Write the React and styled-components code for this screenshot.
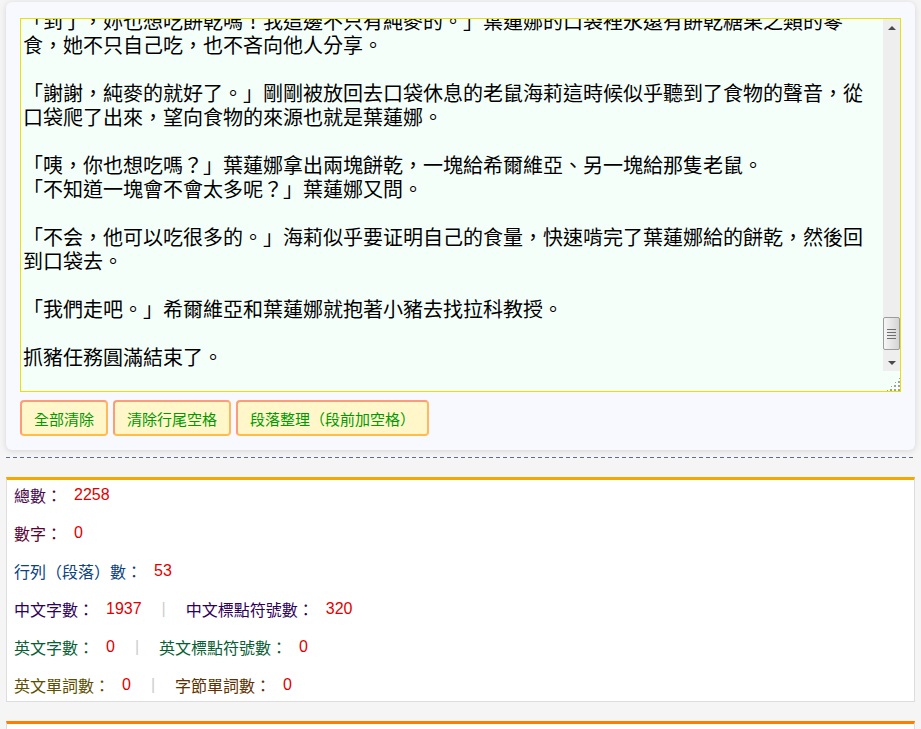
import React, { useLayoutEffect, useRef } from "react";
import styled, { createGlobalStyle } from "styled-components";

const GlobalStyle = createGlobalStyle`
  html, body {
    margin: 0;
    background: #f5f5f5;
  }
  body {
    font-family: "Liberation Sans", "Noto Sans CJK TC", sans-serif;
  }
`;

// layout
const Page = styled.div`
  padding: 2px 6px 0;
`;

const EditorCard = styled.div`
  background: #f8f8ff;
  border-radius: 6px;
  box-shadow: 0 1px 6px rgba(0, 0, 0, 0.13);
  padding: 16px 14px 14px;
`;

const TextWrap = styled.div`
  position: relative;
`;

const TextBox = styled.textarea`
  display: block;
  box-sizing: border-box;
  width: 100%;
  height: 374px;
  margin: 0;
  padding: 2px 19px 2px 2px;
  border: 1px solid #e4e400;
  background: #f5fffa;
  color: #000;
  font-family: "Noto Sans CJK TC", sans-serif;
  font-size: 20px;
  line-height: 24px;
  outline: none;

  &::-webkit-resizer {
    background:
      linear-gradient(to bottom right, #f5fffa 55%, transparent 55%),
      radial-gradient(circle, #a0a0a0 1px, transparent 1.4px) 0 0 / 4px 4px,
      #f5fffa;
  }
`;

// the old-style vertical scrollbar drawn over the textarea's right edge
const ScrollBar = styled.div`
  position: absolute;
  top: 1px;
  right: 1px;
  width: 17px;
  height: 352px;
  display: flex;
  flex-direction: column;
  background: #eeeeee;
  pointer-events: none;
`;

const ScrollArrow = styled.div`
  height: 17px;
  display: flex;
  align-items: center;
  justify-content: center;

  &::before {
    content: "";
    border-left: 4px solid transparent;
    border-right: 4px solid transparent;
    ${(p) => (p.down ? "border-top: 4px solid #4a4a4a;" : "border-bottom: 4px solid #4a4a4a;")}
  }
`;

const ScrollTrack = styled.div`
  flex: 1;
  display: flex;
  flex-direction: column;
  justify-content: flex-end;
  padding-bottom: 4px;
`;

const ScrollThumb = styled.div`
  height: 33px;
  box-sizing: border-box;
  border: 1px solid #9c9c9c;
  border-radius: 2px;
  background:
    repeating-linear-gradient(to bottom, #6e6e6e 0 1px, transparent 1px 3px) center / 9px 10px no-repeat,
    linear-gradient(to right, #f6f6f6, #d4d4d4);
`;

const ButtonRow = styled.div`
  display: flex;
  gap: 5px;
  margin-top: 8px;
`;

const ToolButton = styled.button`
  box-sizing: border-box;
  height: 36px;
  padding: 0 12px;
  border: 2px solid;
  border-color: #ff9c78 #ffb95a #ffbd48 #ff9c78;
  border-radius: 4px;
  background: #fff7c9;
  color: #009900;
  font-family: "Noto Sans CJK TC", sans-serif;
  font-size: 15px;
  line-height: 1;
  cursor: pointer;
`;

const Divider = styled.div`
  height: 1px;
  margin: 7px 0 19px;
  background: repeating-linear-gradient(to right, #5d6d8e 0 4px, transparent 4px 7px);
`;

const Panel = styled.div`
  background: #fff;
  border: 1px solid #dddddd;
  border-top: 3px solid ${(p) => p.accent};
`;

const StatsPanel = styled(Panel)`
  padding: 4px 7px 5px;
  margin-bottom: 19px;
`;

const NextPanel = styled(Panel)`
  height: 40px;
`;

const StatRow = styled.div`
  display: flex;
  align-items: center;
  height: 22px;
  font-size: 16px;

  & + & {
    margin-top: 16px;
  }
`;

const StatLabel = styled.span`
  color: ${(p) => p.color};
  font-family: "Noto Sans CJK TC", sans-serif;
`;

const StatValue = styled.span`
  margin-left: 12px;
  color: #e00000;
  font-family: "Liberation Sans", sans-serif;
`;

const StatSep = styled.span`
  margin: 0 20px;
  color: #cccccc;
  font-family: "Liberation Sans", sans-serif;
`;

const story =
  "「到了，妳也想吃餅乾嗎！我這邊不只有純麥的。」葉蓮娜的口袋裡永遠有餅乾糖果之類的零食，她不只自己吃，也不吝向他人分享。\n" +
  "\n" +
  "「謝謝，純麥的就好了。」剛剛被放回去口袋休息的老鼠海莉這時候似乎聽到了食物的聲音，從口袋爬了出來，望向食物的來源也就是葉蓮娜。\n" +
  "\n" +
  "「咦，你也想吃嗎？」葉蓮娜拿出兩塊餅乾，一塊給希爾維亞、另一塊給那隻老鼠。\n" +
  "「不知道一塊會不會太多呢？」葉蓮娜又問。\n" +
  "\n" +
  "「不会，他可以吃很多的。」海莉似乎要证明自己的食量，快速啃完了葉蓮娜給的餅乾，然後回到口袋去。\n" +
  "\n" +
  "「我們走吧。」希爾維亞和葉蓮娜就抱著小豬去找拉科教授。\n" +
  "\n" +
  "抓豬任務圓滿結束了。\n";

const stats = [
  [{ label: "總數：", value: "2258", color: "#4a0a4a" }],
  [{ label: "數字：", value: "0", color: "#600030" }],
  [{ label: "行列（段落）數：", value: "53", color: "#0b4280" }],
  [
    { label: "中文字數：", value: "1937", color: "#2e0058" },
    { label: "中文標點符號數：", value: "320", color: "#2e0058" },
  ],
  [
    { label: "英文字數：", value: "0", color: "#075e33" },
    { label: "英文標點符號數：", value: "0", color: "#075e33" },
  ],
  [
    { label: "英文單詞數：", value: "0", color: "#5e4e00" },
    { label: "字節單詞數：", value: "0", color: "#5e3000" },
  ],
];

const App = () => {
  const boxRef = useRef(null);

  useLayoutEffect(() => {
    if (boxRef.current) boxRef.current.scrollTop = 12;
  }, []);

  return (
    <Page>
      <GlobalStyle />
      <EditorCard>
        <TextWrap>
          <TextBox ref={boxRef} defaultValue={story} spellCheck={false} />
          <ScrollBar>
            <ScrollArrow />
            <ScrollTrack>
              <ScrollThumb />
            </ScrollTrack>
            <ScrollArrow down />
          </ScrollBar>
        </TextWrap>
        <ButtonRow>
          <ToolButton>全部清除</ToolButton>
          <ToolButton>清除行尾空格</ToolButton>
          <ToolButton>段落整理（段前加空格）</ToolButton>
        </ButtonRow>
      </EditorCard>
      <Divider />
      <StatsPanel accent="#f5a800">
        {stats.map((row, i) => (
          <StatRow key={i}>
            {row.map((item, j) => (
              <React.Fragment key={item.label}>
                {j > 0 && <StatSep>|</StatSep>}
                <StatLabel color={item.color}>{item.label}</StatLabel>
                <StatValue>{item.value}</StatValue>
              </React.Fragment>
            ))}
          </StatRow>
        ))}
      </StatsPanel>
      <NextPanel accent="#ff7e00" />
    </Page>
  );
};

export default App;
